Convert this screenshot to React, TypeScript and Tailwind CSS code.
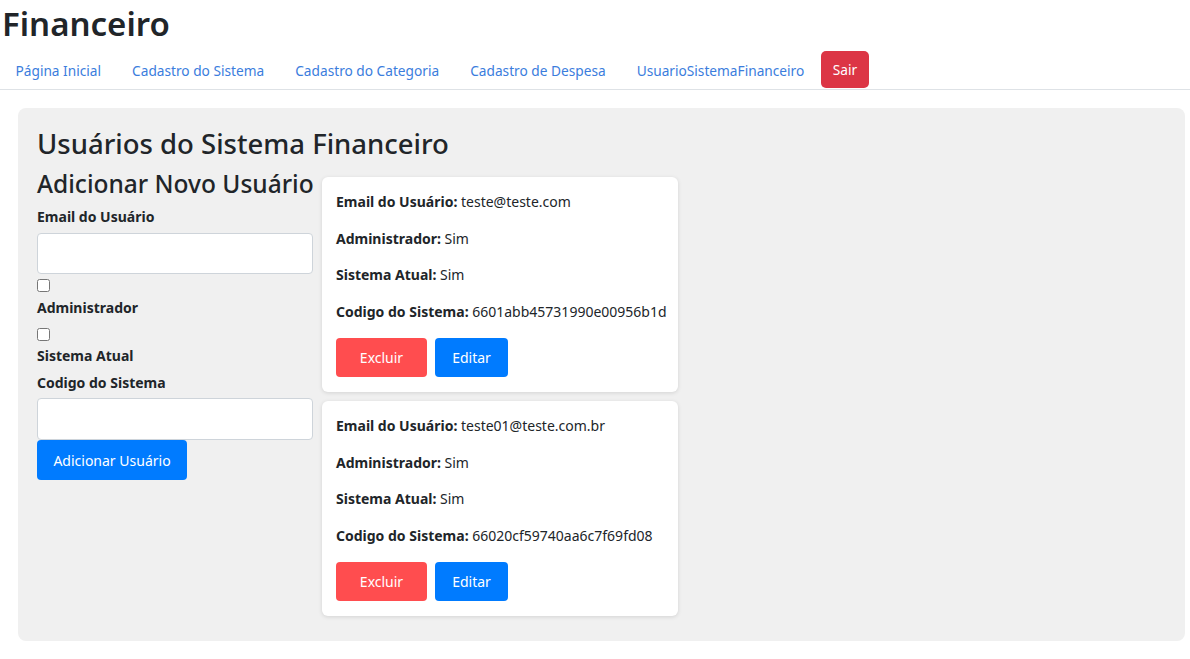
import React from "react";

const users = [
  { email: "teste@teste.com", admin: "Sim", atual: "Sim", codigo: "6601abb45731990e00956b1d" },
  { email: "teste01@teste.com.br", admin: "Sim", atual: "Sim", codigo: "66020cf59740aa6c7f69fd08" },
];

const navLinks = [
  "Página Inicial",
  "Cadastro do Sistema",
  "Cadastro do Categoria",
  "Cadastro de Despesa",
  "UsuarioSistemaFinanceiro",
];

export default function App() {
  return (
    <div className="min-h-[659px] bg-white text-[#212529] font-['Noto_Sans',sans-serif]">
      <h1 className="pl-[2px] text-[33px] leading-[48px] font-semibold">Financeiro</h1>
      <nav className="mt-[3px] flex h-[39px] items-stretch border-b border-[#dee2e6]">
        {navLinks.map((l) => (
          <a key={l} href="#" className="flex items-center px-[15.5px] pt-[2px] text-[13.7px] text-[#3b7ddd]">
            {l}
          </a>
        ))}
        <button className="ml-[1px] mb-[1px] rounded-[5px] bg-[#dc3545] px-[12px] pt-[1px] text-[13.7px] text-white">Sair</button>
      </nav>
      <div className="ml-[18px] mt-[18px] h-[533px] w-[1167px] rounded-[8px] bg-[#f0f0f0] px-[19px] pt-[16px]">
        <h2 className="text-[27.5px] leading-[40px] font-medium">Usuários do Sistema Financeiro</h2>
        <div className="mt-[4px] flex items-start gap-[9px]">
          <div className="w-[276px]">
            <h3 className="h-[32px] whitespace-nowrap text-[24.5px] leading-[32px] font-medium">Adicionar Novo Usuário</h3>
            <label className="mt-[7px] block text-[14px] leading-[20px] font-bold">Email do Usuário</label>
            <input className="mt-[6px] block h-[41px] w-full rounded-[4px] border border-[#ced4da] bg-white" />
            <input type="checkbox" className="mt-[5px] block h-[13px] w-[13px]" />
            <label className="mt-[6px] block text-[14px] leading-[20px] font-bold">Administrador</label>
            <input type="checkbox" className="mt-[10px] block h-[13px] w-[13px]" />
            <label className="mt-[5px] block text-[14px] leading-[20px] font-bold">Sistema Atual</label>
            <label className="mt-[7px] block text-[14px] leading-[20px] font-bold">Codigo do Sistema</label>
            <input className="mt-[5px] block h-[42px] w-full rounded-[4px] border border-[#ced4da] bg-white" />
            <button className="block h-[40px] w-[150px] rounded-[4px] bg-[#007bff] text-[14px] text-white">Adicionar Usuário</button>
          </div>
          <div className="mt-[9px] flex w-[356px] flex-col gap-[9px]">
            {users.map((u) => (
              <div key={u.codigo} className="rounded-[6px] bg-white px-[14px] pt-[15px] pb-[15px] shadow-[0_1px_4px_rgba(0,0,0,0.12)]">
                <p className="mb-[17px] whitespace-nowrap text-[14px] leading-[20px]"><b>Email do Usuário:</b> {u.email}</p>
                <p className="mb-[16px] whitespace-nowrap text-[14px] leading-[20px]"><b>Administrador:</b> {u.admin}</p>
                <p className="mb-[17px] whitespace-nowrap text-[14px] leading-[20px]"><b>Sistema Atual:</b> {u.atual}</p>
                <p className="mb-[16px] whitespace-nowrap text-[14px] leading-[20px]"><b>Codigo do Sistema:</b> {u.codigo}</p>
                <div className="flex gap-[8px]">
                  <button className="h-[39px] w-[91px] rounded-[4px] bg-[#ff4d4f] text-[14px] text-white">Excluir</button>
                  <button className="h-[39px] w-[73px] rounded-[4px] bg-[#007bff] text-[14px] text-white">Editar</button>
                </div>
              </div>
            ))}
          </div>
        </div>
      </div>
    </div>
  );
}
